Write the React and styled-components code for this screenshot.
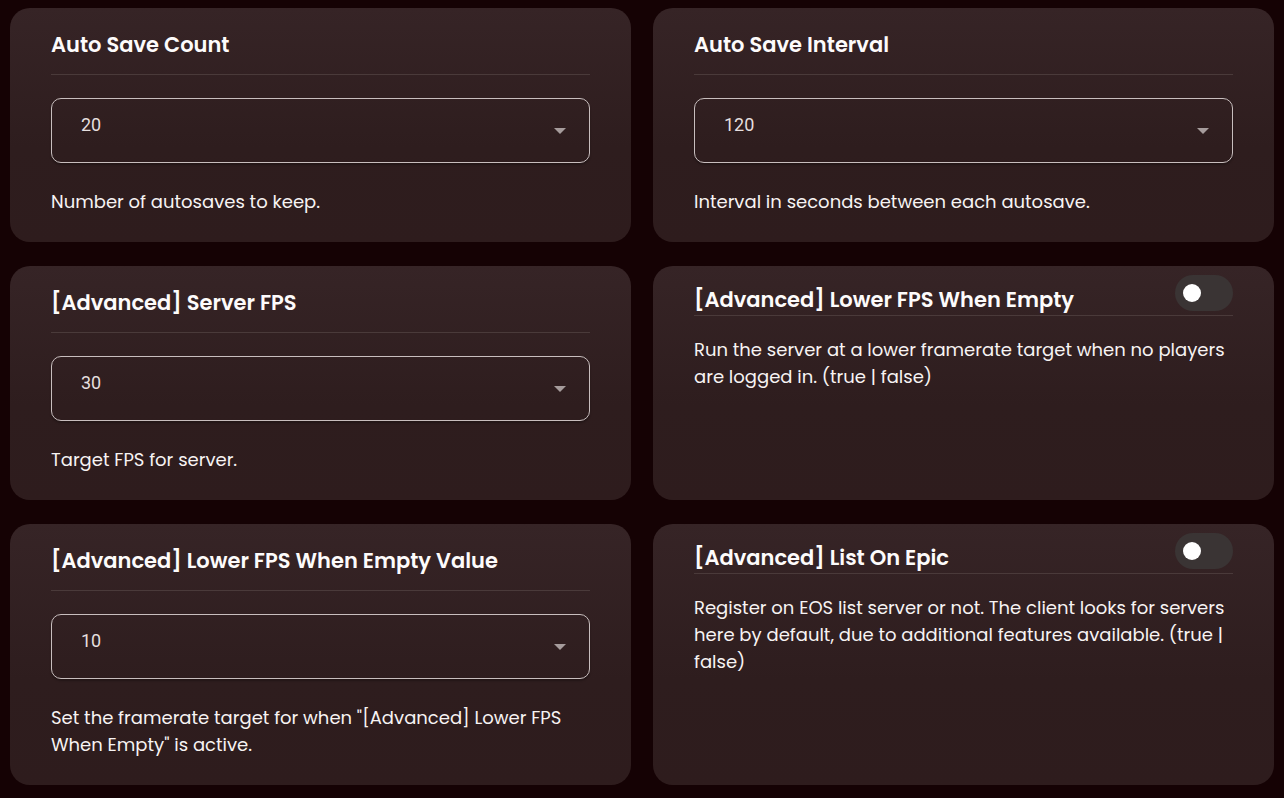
import React from "react";
import styled, { createGlobalStyle } from "styled-components";

const GlobalStyle = createGlobalStyle`
  html, body {
    margin: 0;
    padding: 0;
    background: #150204;
  }
  body {
    font-family: "Poppins", Inter, "Noto Sans", sans-serif;
    color: #fff;
  }
`;

const Page = styled.div`
  display: grid;
  grid-template-columns: 1fr 1fr;
  column-gap: 22px;
  row-gap: 24px;
  padding: 8px 10px 14px;
  background: #150204;
  min-height: 776px;
  align-items: stretch;
`;

const Card = styled.div`
  background: linear-gradient(180deg, #362426 0%, #2e1d1e 60%, #2e1c1d 100%);
  border-radius: 20px;
  padding: ${(p) => (p.$toggle ? "9px" : "22px")} 41px 27px;
  box-sizing: border-box;
`;

const Header = styled.div`
  display: flex;
  justify-content: space-between;
  align-items: flex-end;
  border-bottom: 1px solid #4a3a3a;
  padding-bottom: ${(p) => (p.$toggle ? "0" : "14px")};
`;

const Title = styled.h3`
  margin: 0;
  font-size: 21px;
  line-height: 30px;
  font-weight: 600;
  color: #fdfbfb;
`;

const Switch = styled.div`
  width: 58px;
  height: 36px;
  border-radius: 18px;
  background: #3a3434;
  margin-bottom: 4px;
  flex-shrink: 0;
  display: flex;
  align-items: center;
  padding-left: 8px;
  box-sizing: border-box;
`;

const Knob = styled.span`
  width: 18px;
  height: 18px;
  border-radius: 50%;
  background: #fff;
`;

const Select = styled.div`
  margin-top: 23px;
  height: 65px;
  box-sizing: border-box;
  border: 1px solid #c8bebe;
  border-radius: 10px;
  display: flex;
  align-items: center;
  justify-content: space-between;
  padding: 0 23px 12px 29px;
  font-family: Roboto, "Noto Sans", sans-serif;
  font-size: 18px;
  color: #e6dfdf;
  box-shadow: 0 2px 2px rgba(0, 0, 0, 0.25);
`;

const Arrow = styled.span`
  width: 0;
  height: 0;
  border-left: 6px solid transparent;
  border-right: 6px solid transparent;
  border-top: 6px solid #a69c9c;
  margin-top: 12px;
`;

const Desc = styled.p`
  margin: ${(p) => (p.$toggle ? "20px" : "25px")} 0 0;
  font-size: 18px;
  line-height: 27px;
  color: #f7f3f3;
`;

const settings = [
  { title: "Auto Save Count", value: "20", desc: "Number of autosaves to keep." },
  { title: "Auto Save Interval", value: "120", desc: "Interval in seconds between each autosave." },
  { title: "[Advanced] Server FPS", value: "30", desc: "Target FPS for server." },
  {
    title: "[Advanced] Lower FPS When Empty",
    toggle: true,
    desc: "Run the server at a lower framerate target when no players are logged in. (true | false)",
  },
  {
    title: "[Advanced] Lower FPS When Empty Value",
    value: "10",
    desc: 'Set the framerate target for when "[Advanced] Lower FPS When Empty" is active.',
  },
  {
    title: "[Advanced] List On Epic",
    toggle: true,
    desc: "Register on EOS list server or not. The client looks for servers here by default, due to additional features available. (true | false)",
  },
];

const SettingCard = ({ title, value, desc, toggle }) => (
  <Card $toggle={toggle}>
    <Header $toggle={toggle}>
      <Title>{title}</Title>
      {toggle && (
        <Switch>
          <Knob />
        </Switch>
      )}
    </Header>
    {!toggle && (
      <Select>
        <span>{value}</span>
        <Arrow />
      </Select>
    )}
    <Desc $toggle={toggle}>{desc}</Desc>
  </Card>
);

export default function App() {
  return (
    <>
      <GlobalStyle />
      <Page>
        {settings.map((s) => (
          <SettingCard key={s.title} {...s} />
        ))}
      </Page>
    </>
  );
}
